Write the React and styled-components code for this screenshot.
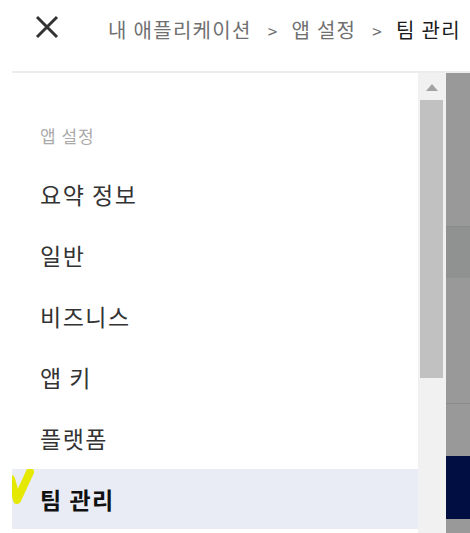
import styled, { createGlobalStyle } from 'styled-components';

const GlobalStyle = createGlobalStyle`
  html, body {
    margin: 0;
    padding: 0;
    background: #ffffff;
    overflow: hidden;
  }
  body {
    font-family: "Noto Sans CJK KR", "Noto Sans", sans-serif;
  }
`;

const menuItems = ['요약 정보', '일반', '비즈니스', '앱 키', '플랫폼', '팀 관리'];
const crumbs = ['내 애플리케이션', '앱 설정', '팀 관리'];

function App() {
  const active = '팀 관리';

  return (
    <Page>
      <GlobalStyle />
      <Header>
        <CloseButton aria-label="닫기">
          <svg width="24" height="24" viewBox="0 0 24 24">
            <path d="M2 2 L22 22 M22 2 L2 22" stroke="#333" strokeWidth="3" />
          </svg>
        </CloseButton>
        <Breadcrumb>
          {crumbs.map((c, i) => (
            <Crumb key={c} $last={i === crumbs.length - 1}>
              {i > 0 && <Sep>&gt;</Sep>}
              {c}
            </Crumb>
          ))}
        </Breadcrumb>
      </Header>
      <Body>
        <Menu>
          <Heading>앱 설정</Heading>
          {menuItems.map((item) => (
            <Item key={item} $active={item === active}>
              {item === active && (
                <Check width="24" height="38" viewBox="0 0 24 38">
                  <path d="M-1 10 L5 31 L18 3" stroke="#e5e800" strokeWidth="8"
                    strokeLinecap="round" strokeLinejoin="round" fill="none" />
                </Check>
              )}
              {item}
            </Item>
          ))}
        </Menu>
        <Scrollbar>
          <Arrow />
          <Thumb />
        </Scrollbar>
        <Backdrop>
          <Band $h={153} $c="#999999" />
          <Band $h={1} $c="#8a8a8a" />
          <Band $h={51} $c="#909291" />
          <Band $h={125} $c="#999999" />
          <Band $h={1} $c="#8a8a8a" />
          <Band $h={52} $c="#999999" />
          <Band $h={63} $c="#000e42" />
          <Band $h={20} $c="#999999" />
        </Backdrop>
      </Body>
    </Page>
  );
}

export default App;

const Page = styled.div`
  width: 470px;
  height: 533px;
  display: flex;
  flex-direction: column;
  overflow: hidden;
`;

const Header = styled.header`
  height: 73px;
  margin-left: 12px;
  border-bottom: 2px solid #ececec;
  display: flex;
  align-items: center;
  padding-left: 23px;
  box-sizing: border-box;
  flex-shrink: 0;
`;

const CloseButton = styled.button`
  width: 24px;
  height: 24px;
  padding: 0;
  border: 0;
  background: none;
  display: flex;
  margin-top: -17px;
`;

const Breadcrumb = styled.nav`
  display: flex;
  margin-left: 49px;
  margin-top: -12px;
  font-size: 20px;
  letter-spacing: 1.3px;
  white-space: nowrap;
`;

const Crumb = styled.span`
  color: ${(p) => (p.$last ? '#1a1a1a' : '#707070')};
`;

const Sep = styled.span`
  color: #707070;
  font-size: 17px;
  margin: 0 13px 0 16px;
`;

const Body = styled.div`
  flex: 1;
  display: flex;
  min-height: 0;
`;

const Menu = styled.div`
  width: 406px;
  margin-left: 12px;
  display: flex;
  flex-direction: column;
`;

const Heading = styled.div`
  height: 90px;
  flex-shrink: 0;
  box-sizing: border-box;
  padding: 50px 0 0 28px;
  font-size: 17px;
  letter-spacing: 1px;
  color: #aaaaaa;
`;

const Item = styled.div`
  position: relative;
  height: 60px;
  margin-top: 1px;
  flex-shrink: 0;
  display: flex;
  align-items: center;
  padding-left: 28px;
  font-size: 23px;
  letter-spacing: 1.5px;
  color: ${(p) => (p.$active ? '#111111' : '#333333')};
  font-weight: ${(p) => (p.$active ? 700 : 400)};
  background: ${(p) => (p.$active ? '#e9ecf5' : 'transparent')};
`;

const Check = styled.svg`
  position: absolute;
  left: 0;
  top: 0;
`;

const Scrollbar = styled.div`
  width: 28px;
  background: #f1f1f1;
  display: flex;
  flex-direction: column;
  align-items: flex-start;
  flex-shrink: 0;
`;

const Arrow = styled.div`
  width: 0;
  height: 0;
  margin: 11px 0 0 8px;
  border-left: 6px solid transparent;
  border-right: 6px solid transparent;
  border-bottom: 7px solid #a3a3a3;
`;

const Thumb = styled.div`
  width: 23px;
  height: 278px;
  margin: 9px 0 0 2px;
  background: #c1c1c1;
`;

const Backdrop = styled.div`
  flex: 1;
  display: flex;
  flex-direction: column;
`;

const Band = styled.div`
  height: ${(p) => p.$h}px;
  background: ${(p) => p.$c};
  flex-shrink: 0;
`;
